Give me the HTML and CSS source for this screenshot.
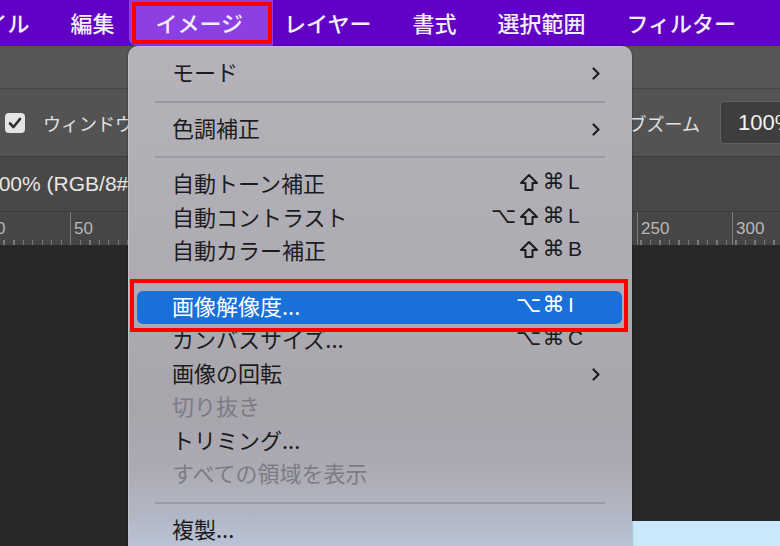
FILE: index.html
```html
<!DOCTYPE html>
<html lang="ja">
<head>
    <meta charset="UTF-8">
    <meta name="viewport" content="width=device-width, initial-scale=1.0">
    <title>イメージメニュー</title>
    <link rel="stylesheet" href="styles.css">
</head>
<body>
    <div class="app">
        <nav class="menubar">
            <span class="menubar-item first">ファイル</span>
            <span class="menubar-item">編集</span>
            <span class="menubar-item active">イメージ</span>
            <span class="menubar-item">レイヤー</span>
            <span class="menubar-item">書式</span>
            <span class="menubar-item">選択範囲</span>
            <span class="menubar-item">フィルター</span>
        </nav>
        <div class="appbar"></div>
        <div class="options">
            <span class="check">
                <svg width="14" height="12" viewBox="0 0 14 12"><path d="M2 6.5 L5.5 10 L12 2" fill="none" stroke="#2e2e2e" stroke-width="2.6" stroke-linecap="round" stroke-linejoin="round"/></svg>
            </span>
            <span class="opt-text">ウィンドウサイズを変更</span>
            <span class="spacer"></span>
            <span class="opt-text">スクラブズーム</span>
            <span class="zoom-box">100%</span>
        </div>
        <div class="doctab">
            <span class="doc-title">100% (RGB/8#)</span>
        </div>
        <div class="ruler">
            <span class="tick" style="left: -5px"></span>
            <span class="ruler-num" style="left: -4px">0</span>
            <span class="tick" style="left: 70px"></span>
            <span class="ruler-num" style="left: 74px">50</span>
            <span class="tick" style="left: 637px"></span>
            <span class="ruler-num" style="left: 641px">250</span>
            <span class="tick" style="left: 732px"></span>
            <span class="ruler-num" style="left: 736px">300</span>
        </div>
        <div class="canvas">
            <div class="image"></div>
        </div>
    </div>

    <div class="menu">
        <div class="item"><span class="label">モード</span><span class="arrow"><svg width="8" height="13" viewBox="0 0 8 13"><path d="M1.5 1.5 L6.5 6.5 L1.5 11.5" fill="none" stroke="#1e1e22" stroke-width="2.2" stroke-linecap="round" stroke-linejoin="round"/></svg></span></div>
        <div class="sep"></div>
        <div class="item"><span class="label">色調補正</span><span class="arrow"><svg width="8" height="13" viewBox="0 0 8 13"><path d="M1.5 1.5 L6.5 6.5 L1.5 11.5" fill="none" stroke="#1e1e22" stroke-width="2.2" stroke-linecap="round" stroke-linejoin="round"/></svg></span></div>
        <div class="sep"></div>
        <div class="item"><span class="label">自動トーン補正</span><span class="mods"><span class="sym shift"><svg width="20" height="19" viewBox="0 0 20 19"><path d="M10 2 L18 10 H13.5 V17 H6.5 V10 H2 Z" fill="none" stroke="currentColor" stroke-width="2" stroke-linejoin="round"/></svg></span><span class="sym">⌘</span></span><span class="key">L</span><span class="arrow"></span></div>
        <div class="item"><span class="label">自動コントラスト</span><span class="mods"><span class="sym">⌥</span><span class="sym shift"><svg width="20" height="19" viewBox="0 0 20 19"><path d="M10 2 L18 10 H13.5 V17 H6.5 V10 H2 Z" fill="none" stroke="currentColor" stroke-width="2" stroke-linejoin="round"/></svg></span><span class="sym">⌘</span></span><span class="key">L</span><span class="arrow"></span></div>
        <div class="item"><span class="label">自動カラー補正</span><span class="mods"><span class="sym shift"><svg width="20" height="19" viewBox="0 0 20 19"><path d="M10 2 L18 10 H13.5 V17 H6.5 V10 H2 Z" fill="none" stroke="currentColor" stroke-width="2" stroke-linejoin="round"/></svg></span><span class="sym">⌘</span></span><span class="key">B</span><span class="arrow"></span></div>
        <div class="sep hidden"></div>
        <div class="item selected"><span class="label">画像解像度...</span><span class="mods"><span class="sym">⌥</span><span class="sym">⌘</span></span><span class="key">I</span><span class="arrow"></span></div>
        <div class="item"><span class="label">カンバスサイズ...</span><span class="mods"><span class="sym">⌥</span><span class="sym">⌘</span></span><span class="key">C</span><span class="arrow"></span></div>
        <div class="item"><span class="label">画像の回転</span><span class="arrow"><svg width="8" height="13" viewBox="0 0 8 13"><path d="M1.5 1.5 L6.5 6.5 L1.5 11.5" fill="none" stroke="#1e1e22" stroke-width="2.2" stroke-linecap="round" stroke-linejoin="round"/></svg></span></div>
        <div class="item disabled"><span class="label">切り抜き</span><span class="arrow"></span></div>
        <div class="item"><span class="label">トリミング...</span><span class="arrow"></span></div>
        <div class="item disabled"><span class="label">すべての領域を表示</span><span class="arrow"></span></div>
        <div class="sep"></div>
        <div class="item"><span class="label">複製...</span><span class="arrow"></span></div>
    </div>

    <div class="mark mark-menu"></div>
    <div class="mark mark-item"></div>
</body>
</html>
```

FILE: styles.css
```css
* {
    margin: 0;
    padding: 0;
    box-sizing: border-box;
}
html, body {
    width: 100%;
    height: 100%;
}
body {
    overflow: hidden;
    background: #282828;
    font-family: "Noto Sans CJK JP", "Liberation Sans", sans-serif;
}
.app {
    display: flex;
    flex-direction: column;
    height: 100%;
}
.menubar {
    height: 46px;
    background: #6201c6;
    display: flex;
    align-items: stretch;
    margin-left: -79px;
    flex-shrink: 0;
}
.menubar-item {
    position: relative;
    display: flex;
    align-items: center;
    padding: 0 20.5px 3px;
    color: #f3effa;
    font-size: 22px;
    font-weight: 500;
    white-space: nowrap;
}
.menubar-item.active::before {
    content: "";
    position: absolute;
    top: 0;
    bottom: 0;
    left: -6px;
    right: -9px;
    background: #8c40e4;
    border-radius: 0 0 0 8px;
    z-index: -1;
}
.menubar-item.active {
    z-index: 0;
}
.appbar {
    height: 43px;
    background: #565656;
    border-bottom: 1px solid #444;
    flex-shrink: 0;
}
.options {
    height: 68px;
    background: #535353;
    border-bottom: 1px solid #3d3d3d;
    display: flex;
    align-items: center;
    padding-left: 5px;
    flex-shrink: 0;
}
.check {
    width: 20px;
    height: 20px;
    background: #e4e4e4;
    border-radius: 4px;
    display: flex;
    align-items: center;
    justify-content: center;
    flex-shrink: 0;
}
.opt-text {
    color: #e2e2e2;
    font-size: 18px;
    white-space: nowrap;
    margin-left: 18px;
}
.spacer {
    flex: 1;
}
.zoom-box {
    flex-shrink: 0;
    width: 100px;
    height: 43px;
    margin-left: 20px;
    margin-right: -40px;
    background: #3e3e3e;
    border: 1px solid #616161;
    border-radius: 4px;
    color: #f2f2f2;
    font-family: "Liberation Sans", sans-serif;
    font-size: 22px;
    display: flex;
    align-items: center;
    padding-left: 17px;
}
.doctab {
    height: 55px;
    background: #484848;
    border-bottom: 1px solid #393939;
    display: flex;
    align-items: center;
    flex-shrink: 0;
}
.doc-title {
    color: #e6e6e6;
    font-family: "Liberation Sans", sans-serif;
    font-size: 21px;
    margin-left: -13px;
    white-space: nowrap;
}
.ruler {
    position: relative;
    height: 33px;
    background-color: #464646;
    background-image: repeating-linear-gradient(90deg, #7a7a7a 0 1px, transparent 1px 9.5px);
    background-size: 100% 5px;
    background-position: 4px bottom;
    background-repeat: repeat-x;
    flex-shrink: 0;
}
.tick {
    position: absolute;
    top: 0;
    bottom: 0;
    width: 1px;
    background: #7c7c7c;
}
.ruler-num {
    position: absolute;
    top: 7px;
    color: #b8b8b8;
    font-family: "Liberation Sans", sans-serif;
    font-size: 17px;
}
.canvas {
    flex: 1;
    background: #282828;
    display: flex;
    flex-direction: column;
}
.image {
    margin-top: 276px;
    margin-left: 330px;
    height: 40px;
    background: #c7e9f9;
}

.menu {
    position: absolute;
    left: 128px;
    top: 46px;
    width: 504px;
    height: 520px;
    padding-top: 10px;
    border-radius: 10px 10px 0 0;
    background: linear-gradient(180deg, #b5b3b9 0%, #aeacb3 45%, #a8a5ad 70%, #aba9b1 80%, #b2b6c4 90%, #bccbe0 100%);
    border-left: 1px solid #c4c2c8;
    border-top: 1px solid #c0bec4;
    box-shadow: 0 0 2px rgba(0, 0, 0, 0.5);
}
.item {
    display: flex;
    align-items: center;
    height: 33.5px;
    margin: 0 10px 0 8px;
    padding: 0 22px 5px 35px;
    border-radius: 6px;
    color: #1c1c20;
    font-size: 22px;
    white-space: nowrap;
}
.item .label {
    flex: 1;
}
.item.disabled {
    color: #7d7b83;
}
.item.selected {
    background: #1870d8;
    color: #fff;
}
.mods {
    display: flex;
    align-items: center;
}
.sym {
    width: 25px;
    text-align: center;
    font-family: "DejaVu Sans", sans-serif;
    font-size: 22px;
    line-height: 1;
}
.sym.shift {
    display: flex;
    justify-content: center;
    padding-top: 1px;
}
.key {
    width: 18px;
    padding-left: 2px;
    font-family: "Liberation Sans", sans-serif;
    font-size: 21px;
}
.arrow {
    width: 16px;
    display: flex;
    justify-content: flex-end;
    align-items: center;
    padding-top: 5px;
}
.sep {
    height: 22px;
    margin: 0 27px 0 26px;
    display: flex;
    align-items: center;
}
.sep::after {
    content: "";
    flex: 1;
    height: 2px;
    background: #9b99a1;
}
.sep.hidden::after {
    background: transparent;
}

.mark {
    position: absolute;
    border: 4px solid #ff0000;
}
.mark-menu {
    left: 132px;
    top: 2px;
    width: 140px;
    height: 42px;
}
.mark-item {
    left: 130px;
    top: 279px;
    width: 498px;
    height: 53px;
}
```
